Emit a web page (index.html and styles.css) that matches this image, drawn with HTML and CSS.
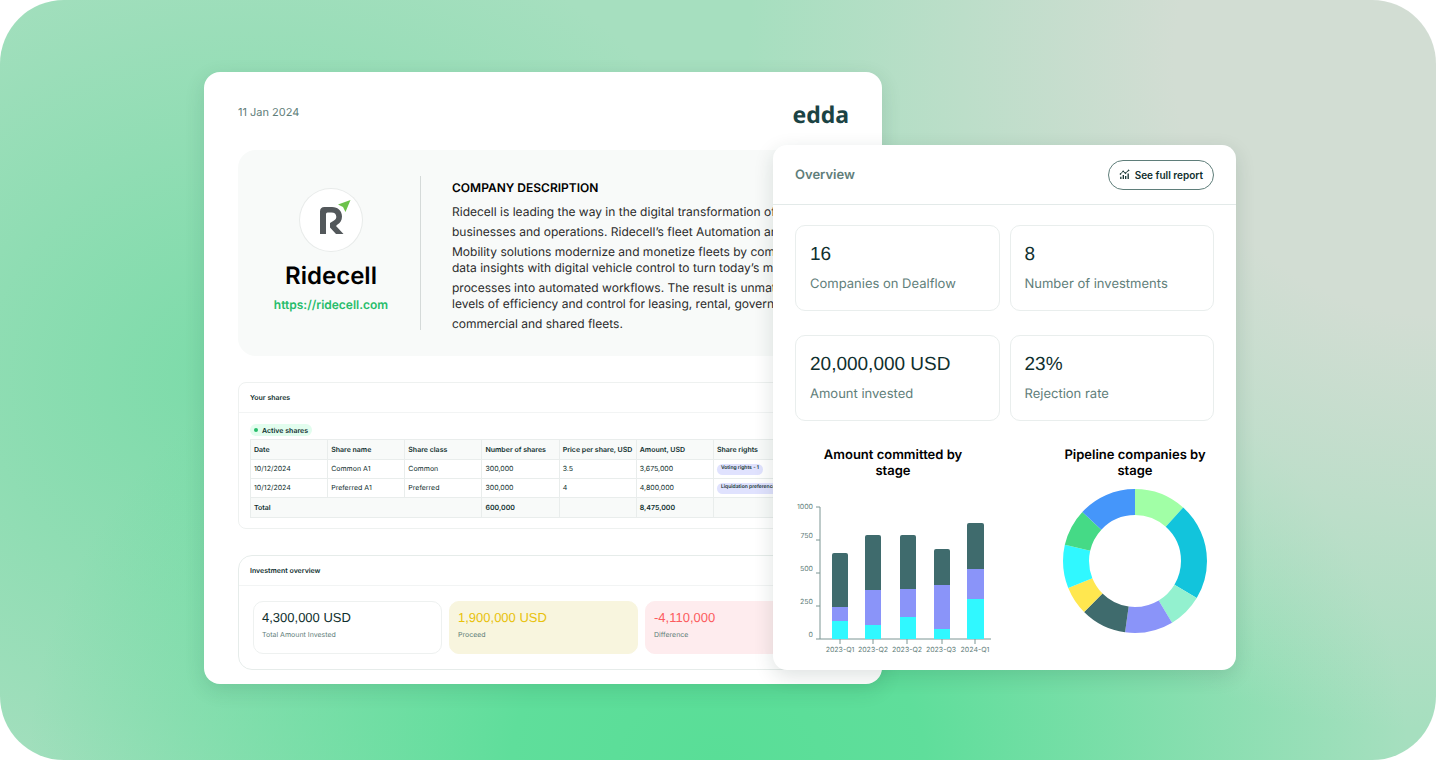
FILE: index.html
```html
<!DOCTYPE html>
<html lang="en">
<head>
    <meta charset="UTF-8">
    <title>Edda reports</title>
    <link rel="stylesheet" href="styles.css">
</head>
<body>
    <main class="stage">
        <article class="report">
            <header class="report-head">
                <time datetime="2024-01-11">11 Jan 2024</time>
                <span class="brand">edda</span>
            </header>

            <section class="company">
                <div class="company-id">
                    <div class="company-logo">
                        <svg width="62" height="62" viewBox="0 0 62 62" aria-hidden="true">
                            <path fill="#53585b" d="M20 45V22.500Q20 18 24.500 18H32C38 18 42 22 42 27.500C42 31.500 40 34 37.500 35.500L36 37L43.500 45H36L30 38.500V34L34 31.500C35.500 30.600 36.300 29.300 36.300 27.700C36.300 25 34.500 23.500 31.500 23.500H27.500Q26 23.500 26 25V45Z"/>
                            <path fill="#6cc24a" d="M38 15.500L50.500 11L45.500 23L43 18Z"/>
                        </svg>
                    </div>
                    <h1>Ridecell</h1>
                    <a href="https://ridecell.com">https://ridecell.com</a>
                </div>
                <div class="company-text">
                    <h2>COMPANY DESCRIPTION</h2>
                    <p>Ridecell is leading the way in the digital transformation of fleet</p>
                    <p>businesses and operations. Ridecell’s fleet Automation and</p>
                    <p>Mobility solutions modernize and monetize fleets by combining<br>
                       data insights with digital vehicle control to turn today’s manual</p>
                    <p>processes into automated workflows. The result is unmatched<br>
                       levels of efficiency and control for leasing, rental, government,</p>
                    <p>commercial and shared fleets.</p>
                </div>
            </section>

            <section class="panel">
                <h3>Your shares</h3>
                <div class="panel-body">
                    <span class="status">Active shares</span>
                    <table class="shares">
                        <thead>
                            <tr>
                                <th>Date</th>
                                <th>Share name</th>
                                <th>Share class</th>
                                <th>Number of shares</th>
                                <th>Price per share, USD</th>
                                <th>Amount, USD</th>
                                <th class="rights">Share rights</th>
                            </tr>
                        </thead>
                        <tbody>
                            <tr>
                                <td>10/12/2024</td>
                                <td>Common A1</td>
                                <td>Common</td>
                                <td>300,000</td>
                                <td>3.5</td>
                                <td>3,675,000</td>
                                <td><span class="tag">Voting rights - 1</span></td>
                            </tr>
                            <tr>
                                <td>10/12/2024</td>
                                <td>Preferred A1</td>
                                <td>Preferred</td>
                                <td>300,000</td>
                                <td>4</td>
                                <td>4,800,000</td>
                                <td><span class="tag">Liquidation preference - 1</span></td>
                            </tr>
                        </tbody>
                        <tfoot>
                            <tr>
                                <td colspan="3">Total</td>
                                <td>600,000</td>
                                <td></td>
                                <td>8,475,000</td>
                                <td></td>
                            </tr>
                        </tfoot>
                    </table>
                </div>
            </section>

            <section class="panel panel-round">
                <h3>Investment overview</h3>
                <div class="sums">
                    <div class="sum">
                        <strong>4,300,000 USD</strong>
                        <span>Total Amount Invested</span>
                    </div>
                    <div class="sum sum-yellow">
                        <strong>1,900,000 USD</strong>
                        <span>Proceed</span>
                    </div>
                    <div class="sum sum-red">
                        <strong>-4,110,000</strong>
                        <span>Difference</span>
                    </div>
                </div>
            </section>
        </article>

        <article class="overview">
            <header class="overview-head">
                <h2>Overview</h2>
                <button type="button">
                    <svg width="11" height="11" viewBox="0 0 12 12" fill="none" stroke="#0f2f2e" aria-hidden="true">
                        <path d="M2 11V8.500M4.700 11V6.500M7.300 11V7.500M10 11V5" stroke-width="1.400"/>
                        <path d="M1.500 5.500L4.500 2.500L7 4.500L10.500 1.500" stroke-width="1"/>
                        <circle cx="1.500" cy="5.500" r=".5"/>
                        <circle cx="4.500" cy="2.500" r=".5"/>
                        <circle cx="7" cy="4.500" r=".5"/>
                        <circle cx="10.500" cy="1.500" r=".5"/>
                    </svg>
                    See full report
                </button>
            </header>

            <div class="metrics">
                <div class="metric"><strong>16</strong><span>Companies on Dealflow</span></div>
                <div class="metric"><strong>8</strong><span>Number of investments</span></div>
                <div class="metric"><strong>20,000,000 USD</strong><span>Amount invested</span></div>
                <div class="metric"><strong>23%</strong><span>Rejection rate</span></div>
            </div>

            <div class="charts">
                <section class="chart">
                    <h3>Amount committed by<br>stage</h3>
                    <svg class="bars" width="196" height="160" viewBox="0 0 196 160">
                        <g class="axis">
                            <path d="M21 11H25V143M21 44H25M21 77H25M21 110H25M21 143H196"/>
                            <path d="M45 143V148M78 143V148M112 143V148M147 143V148M180 143V148"/>
                        </g>
                        <g class="y-labels">
                            <text x="18" y="13">1000</text>
                            <text x="18" y="42">750</text>
                            <text x="18" y="75">500</text>
                            <text x="18" y="108">250</text>
                            <text x="18" y="141">0</text>
                        </g>
                        <g fill="#3f6b6d">
                            <rect x="37" y="57" width="16" height="60" rx="2"/>
                            <rect x="70" y="39" width="16" height="60" rx="2"/>
                            <rect x="105" y="39" width="16" height="60" rx="2"/>
                            <rect x="139" y="53" width="16" height="40" rx="2"/>
                            <rect x="172" y="27" width="17" height="50" rx="2"/>
                        </g>
                        <g fill="#8a94f9">
                            <rect x="37" y="111" width="16" height="14"/>
                            <rect x="70" y="94" width="16" height="35"/>
                            <rect x="105" y="93" width="16" height="28"/>
                            <rect x="139" y="89" width="16" height="44"/>
                            <rect x="172" y="73" width="17" height="30"/>
                        </g>
                        <g fill="#30f8ff">
                            <rect x="37" y="125" width="16" height="18"/>
                            <rect x="70" y="129" width="16" height="14"/>
                            <rect x="105" y="121" width="16" height="22"/>
                            <rect x="139" y="133" width="16" height="10"/>
                            <rect x="172" y="103" width="17" height="40"/>
                        </g>
                        <g class="x-labels">
                            <text x="45" y="156">2023-Q1</text>
                            <text x="78" y="156">2023-Q2</text>
                            <text x="112" y="156">2023-Q2</text>
                            <text x="146" y="156">2023-Q3</text>
                            <text x="180" y="156">2024-Q1</text>
                        </g>
                    </svg>
                </section>
                <section class="chart chart-pie">
                    <h3>Pipeline companies by<br>stage</h3>
                    <svg class="donut" width="144" height="144" viewBox="0 0 144 144">
                        <g transform="rotate(-90 72 72)" fill="none" stroke-width="26">
                            <circle cx="72" cy="72" r="59" pathLength="360" stroke="#a1ffa6" stroke-dasharray="42 318"/>
                            <circle cx="72" cy="72" r="59" pathLength="360" stroke="#12c4dc" stroke-dasharray="79 281" stroke-dashoffset="-42"/>
                            <circle cx="72" cy="72" r="59" pathLength="360" stroke="#93f1cf" stroke-dasharray="28 332" stroke-dashoffset="-121"/>
                            <circle cx="72" cy="72" r="59" pathLength="360" stroke="#8a94f9" stroke-dasharray="39 321" stroke-dashoffset="-149"/>
                            <circle cx="72" cy="72" r="59" pathLength="360" stroke="#3f6b6d" stroke-dasharray="37 323" stroke-dashoffset="-188"/>
                            <circle cx="72" cy="72" r="59" pathLength="360" stroke="#ffe74f" stroke-dasharray="23 337" stroke-dashoffset="-225"/>
                            <circle cx="72" cy="72" r="59" pathLength="360" stroke="#30f8ff" stroke-dasharray="35 325" stroke-dashoffset="-248"/>
                            <circle cx="72" cy="72" r="59" pathLength="360" stroke="#45da86" stroke-dasharray="30 330" stroke-dashoffset="-283"/>
                            <circle cx="72" cy="72" r="59" pathLength="360" stroke="#4596fa" stroke-dasharray="47 313" stroke-dashoffset="-313"/>
                        </g>
                    </svg>
                </section>
            </div>
        </article>
    </main>
</body>
</html>
```
FILE: styles.css
```css
*{
    margin: 0;
    padding: 0;
    box-sizing: border-box;
}
body{
    font-family: Inter, "Liberation Sans", sans-serif;
    color: #0f2f2e;
    background: #fff;
    text-rendering: geometricPrecision;
}
.stage{
    display: grid;
    grid-template-columns: 569fr 109fr 354fr;
    align-items: start;
    min-height: 100vh;
    padding: 72px 200px 72px 204px;
    border-radius: 64px;
    background:
        radial-gradient(ellipse 48% 88% at 100% 8%, #d2ddd3 0, #d2ddd3 38%, rgba(210,221,211,0) 100%),
        radial-gradient(ellipse 48% 70% at 50% 100%, #59de97 0, #5fde9b 30%, rgba(95,222,155,0) 100%),
        radial-gradient(ellipse 38% 62% at 17% 50%, #7adba8 0, rgba(122,219,168,0) 100%),
        #a6dfbf;
}

/* report sheet */
.report{
    grid-column: 1 / 3;
    grid-row: 1;
    display: flex;
    flex-direction: column;
    gap: 26px;
    min-width: 0;
    padding: 30px 33px 14px 34px;
    background: #fff;
    border-radius: 16px;
    box-shadow: 0 6px 20px rgba(20,70,50,.14);
    overflow: hidden;
}
.report-head{
    display: flex;
    justify-content: space-between;
    height: 22px;
}
.report-head time{
    font-size: 11px;
    line-height: 20px;
    color: #5f7e7a;
}
.brand{
    font-family: "Noto Sans", sans-serif;
    font-size: 23px;
    line-height: 24px;
    font-weight: 700;
    color: #1b4344;
}
.company{
    display: flex;
    height: 206px;
    padding: 26px 0;
    background: #f8faf9;
    border-radius: 18px;
}
.company-id{
    flex: none;
    display: flex;
    flex-direction: column;
    align-items: center;
    width: 183px;
    padding: 13px 0 0 4px;
    border-right: 1px solid #d5dad9;
}
.company-logo{
    width: 62px;
    height: 62px;
    border-radius: 50%;
    background: #fff;
    box-shadow: 0 0 0 1px #e8ebea;
}
.company-id h1{
    margin-top: 10px;
    font-size: 24px;
    line-height: 30px;
    font-weight: 600;
    color: #000;
}
.company-id a{
    margin-top: 6px;
    font-size: 12px;
    line-height: 16px;
    font-weight: 600;
    color: #27bd6b;
    text-decoration: none;
}
.company-text{
    display: flex;
    flex-direction: column;
    gap: 4px;
    padding: 4px 0 0 31px;
    font-size: 12px;
    line-height: 16px;
    color: #2b2b2b;
    white-space: nowrap;
}
.company-text h2{
    margin-bottom: 4px;
    font-size: 12px;
    line-height: 16px;
    font-weight: 600;
    color: #000;
}

.panel{
    border: 1px solid #eef1f0;
    border-radius: 8px;
}
.panel-round{
    border-radius: 14px;
    border-color: #e6ecea;
}
.panel h3{
    padding: 0 11px;
    font-size: 7px;
    line-height: 29px;
    font-weight: 600;
    border-bottom: 1px solid #f2f4f4;
}
.panel-body{
    padding: 11px 11px 10px;
}
.status{
    display: flex;
    align-items: center;
    gap: 4px;
    width: max-content;
    height: 12px;
    margin-bottom: 3px;
    padding: 0 4px;
    border-radius: 6px;
    background: #e2fdee;
    font-size: 7px;
    font-weight: 600;
}
.status::before{
    content: "";
    width: 4px;
    height: 4px;
    border-radius: 50%;
    background: #27bd6b;
}
.shares{
    width: 100%;
    table-layout: fixed;
    border-collapse: collapse;
    font-size: 7px;
    line-height: 12px;
}
.shares th,.shares td{
    height: 20px;
    padding: 0 3px;
    border: 1px solid #e9edec;
    text-align: left;
    font-weight: 400;
    white-space: nowrap;
}
.shares tbody td{
    height: 19px;
}
.shares .rights{
    width: 21%;
}
.shares th,.shares tfoot td{
    background: #f8faf9;
    font-weight: 600;
}
.tag{
    display: block;
    width: max-content;
    height: 11px;
    padding: 0 4px;
    border-radius: 6px;
    background: #e0e2fe;
    font-size: 5px;
    line-height: 9px;
    font-weight: 600;
}
.sums{
    display: grid;
    grid-template-columns: repeat(3, 1fr);
    gap: 7px;
    padding: 15px 14px;
}
.sum{
    display: flex;
    flex-direction: column;
    gap: 4px;
    height: 53px;
    padding: 8px;
    border: 1px solid #eef1f0;
    border-radius: 10px;
}
.sum strong,.metric strong{
    font-family: "Liberation Sans", Arial, sans-serif;
    font-weight: 400;
}
.sum strong{
    font-size: 13px;
    line-height: 16px;
}
.sum span{
    font-size: 7px;
    line-height: 10px;
    color: #5f7e7a;
}
.sum-yellow{
    background: #f8f5de;
    border-color: #f8f5de;
}
.sum-yellow strong{
    color: #e8c20c;
}
.sum-red{
    background: #feecee;
    border-color: #feecee;
}
.sum-red strong{
    color: #fc5c60;
}

/* overview card */
.overview{
    grid-column: 2 / 4;
    grid-row: 1;
    z-index: 1;
    margin-top: 73px;
    padding-bottom: 14px;
    background: #fff;
    border-radius: 14px;
    box-shadow: 0 6px 20px rgba(20,50,40,.14);
}
.overview-head{
    display: flex;
    align-items: center;
    justify-content: space-between;
    height: 60px;
    padding: 0 22px;
    border-bottom: 1px solid #e3eae9;
}
.overview-head h2{
    font-size: 13px;
    font-weight: 600;
    color: #5f7e7a;
}
.overview-head button{
    display: flex;
    align-items: center;
    gap: 5px;
    height: 30px;
    padding: 0 10px;
    border: 1px solid #5f7e7a;
    border-radius: 15px;
    background: #fff;
    font-family: inherit;
    font-size: 10px;
    font-weight: 600;
    color: #0f2f2e;
}
.metrics{
    display: grid;
    grid-template-columns: 1fr 1fr;
    gap: 24px 10px;
    padding: 20px 22px 0;
}
.metric{
    display: flex;
    flex-direction: column;
    gap: 7px;
    height: 86px;
    padding: 17px 14px;
    border: 1px solid #e9eeed;
    border-radius: 10px;
}
.metric strong{
    font-size: 19px;
    line-height: 24px;
}
.metric span{
    font-size: 13px;
    line-height: 20px;
    color: #5f7e7a;
}
.charts{
    display: flex;
    justify-content: space-between;
    padding: 26px 22px 0;
}
.chart{
    display: flex;
    flex-direction: column;
    align-items: center;
    width: 196px;
}
.chart-pie{
    width: 158px;
}
.chart h3{
    font-size: 13px;
    line-height: 16px;
    font-weight: 600;
    color: #000;
    text-align: center;
    white-space: nowrap;
}
.bars{
    margin-top: 17px;
}
.donut{
    margin-top: 10px;
}
.axis{
    fill: none;
    stroke: #7d9694;
}
.y-labels,.x-labels{
    font-size: 7px;
    fill: #5f7e7a;
    text-anchor: end;
}
.x-labels{
    text-anchor: middle;
}
```
